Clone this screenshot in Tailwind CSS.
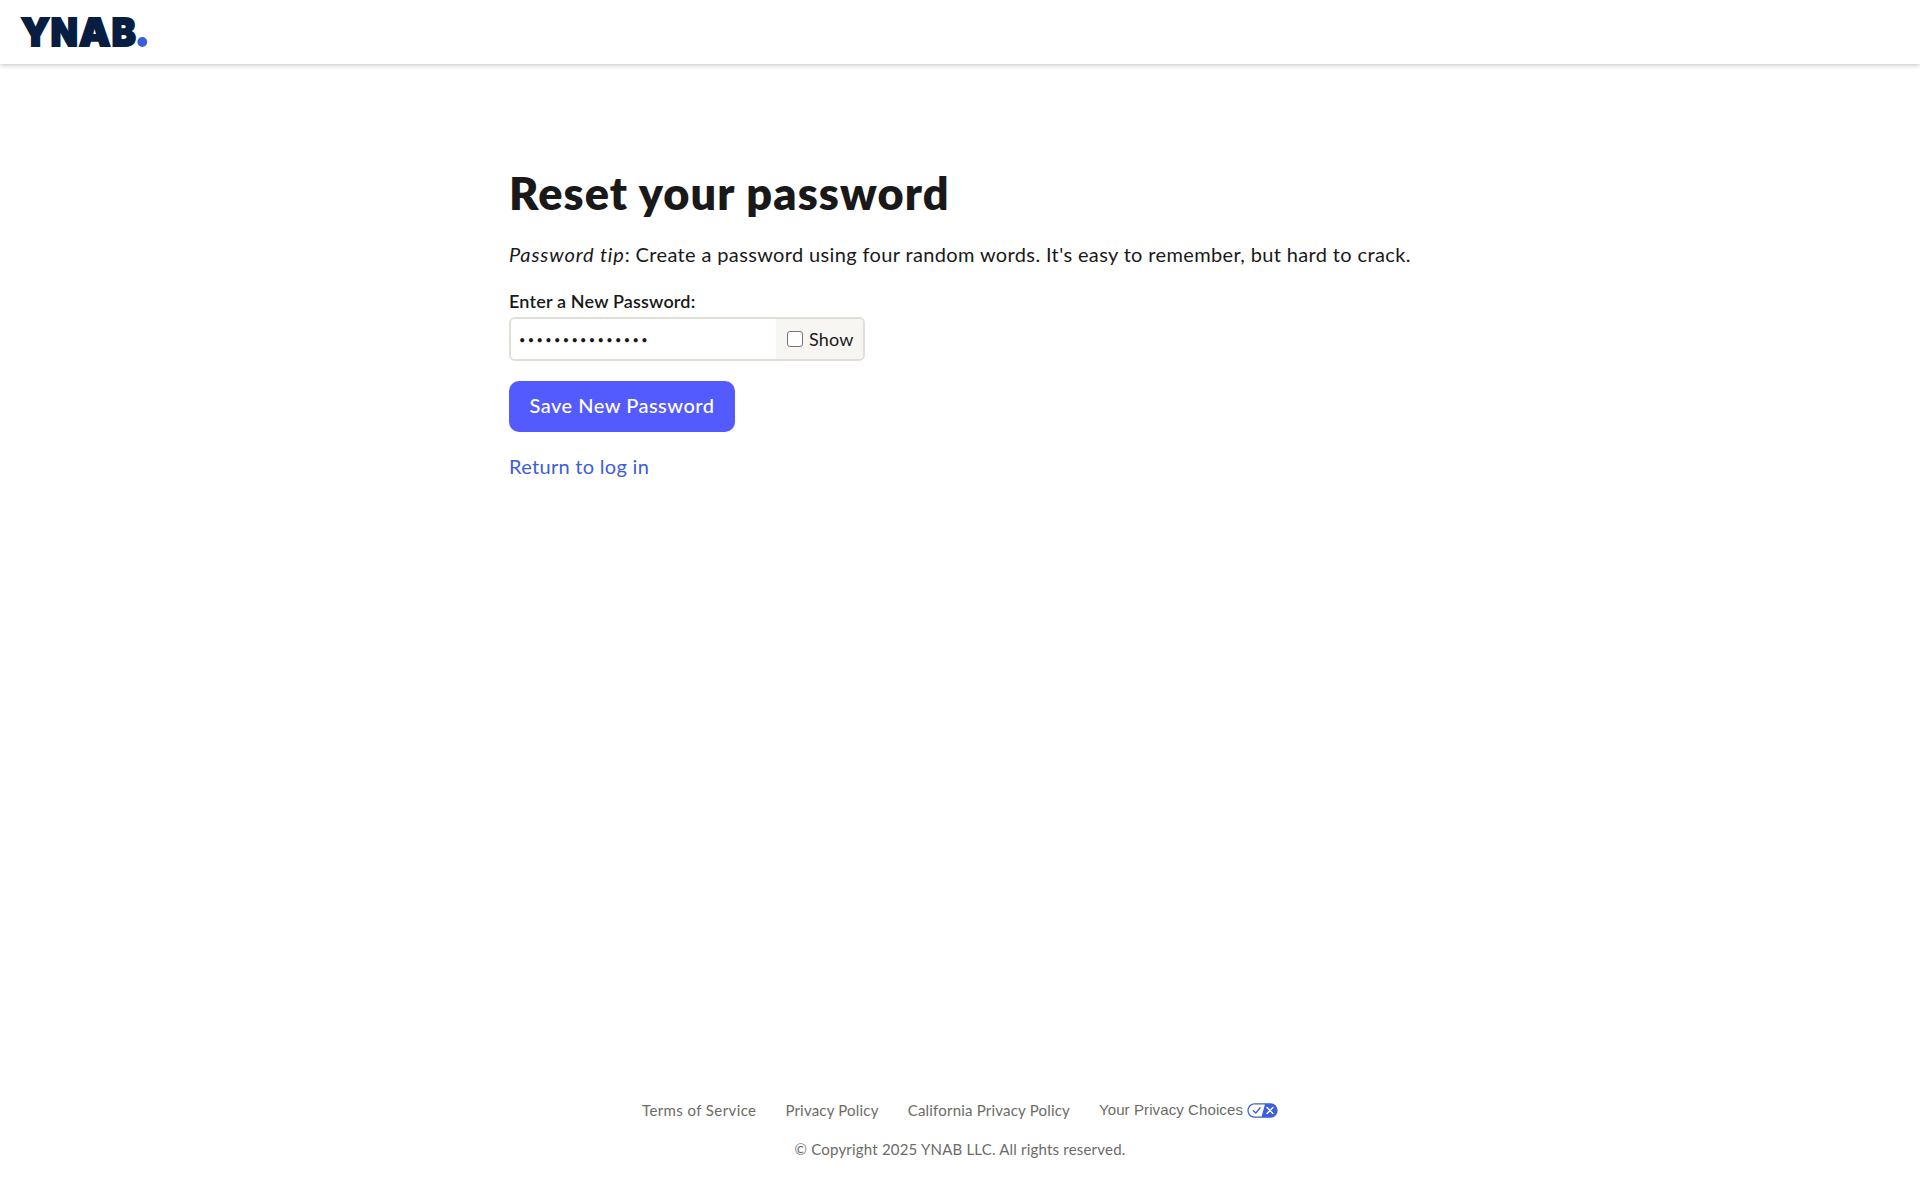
<!DOCTYPE html>
<html lang="en">
<head>
    <meta charset="UTF-8">
    <meta name="viewport" content="width=device-width, initial-scale=1.0">
    <title>Reset your password | YNAB</title>
    <script src="https://cdn.jsdelivr.net/npm/@tailwindcss/browser@4"></script>
</head>
<body class="flex h-screen flex-col overflow-hidden bg-white font-['Lato',sans-serif] text-xl leading-6 text-[#191919]">
    <!-- Header -->
    <header class="flex h-16 shrink-0 items-center bg-white px-5 shadow-[0_1px_5px_rgba(0,0,0,0.25)]">
        <a href="#" aria-label="YNAB">
            <svg class="block h-8 w-[128px] overflow-visible" viewBox="0 0 128 32" fill="#071d42" stroke="#071d42" stroke-width="2" font-family="Inter" font-weight="900" font-size="39">
                <text x="1" y="29.8" textLength="28.8" lengthAdjust="spacingAndGlyphs">Y</text>
                <text x="30.8" y="29.8" textLength="27" lengthAdjust="spacingAndGlyphs">N</text>
                <text x="59" y="29.8" textLength="31.4" lengthAdjust="spacingAndGlyphs">A</text>
                <text x="91.8" y="29.8" textLength="24" lengthAdjust="spacingAndGlyphs">B</text>
                <circle cx="122.3" cy="26" r="4.9" fill="#3b5eda" stroke="none"/>
            </svg>
        </a>
    </header>

    <!-- Reset form -->
    <main class="mx-auto w-[902px] flex-1 pt-[102px]">
        <h1 class="mb-[22px] text-[45px] leading-[54px] font-extrabold tracking-[1.14px] whitespace-nowrap">Reset your password</h1>
        <p class="mb-6 tracking-[0.36px] whitespace-nowrap"><em class="tracking-[0.88px]">Password tip</em>: Create a password using four random words. It's easy to remember, but hard to crack.</p>
        <form>
            <label for="password" class="mb-[5px] block text-lg leading-[22px] font-semibold tracking-[0.17px]">Enter a New Password:</label>
            <div class="mb-5 flex h-11 w-[356px] overflow-hidden rounded-md border-2 border-[#dfded7]">
                <input id="password" type="password" value="correcthorsebat" class="min-w-0 flex-1 bg-white pt-[2px] pl-2 text-[11px] tracking-[2.35px] outline-none">
                <label class="flex w-[87px] items-center gap-[6px] bg-[#f7f6f2] pl-[11px] text-lg tracking-[0.2px]">
                    <input type="checkbox" class="size-4 shrink-0 appearance-none rounded-[3px] border border-[#767676] bg-white">
                    <span>Show</span>
                </label>
            </div>
            <button type="button" class="mb-[22px] block h-[51px] w-[226px] rounded-[10px] bg-[#545bfe] pb-[3px] font-medium tracking-[0.5px] text-white">Save New Password</button>
        </form>
        <a href="#" class="tracking-[0.3px] text-[#3b5eda]">Return to log in</a>
    </main>

    <!-- Footer -->
    <footer class="flex flex-col items-center pb-[41px] text-[15px] leading-5 text-[#6b6b66]">
        <nav class="mb-[19px] flex items-center gap-[29px]">
            <a href="#" class="tracking-[0.4px]">Terms of Service</a>
            <a href="#" class="tracking-[0.2px]">Privacy Policy</a>
            <a href="#" class="tracking-[0.2px]">California Privacy Policy</a>
            <button type="button" class="flex items-center gap-1 font-['Liberation_Sans',sans-serif] tracking-[0.1px]">
                Your Privacy Choices
                <svg class="h-[15px] w-[31px]" viewBox="0 0 30 14">
                    <path fill="#fff" d="M7.4 12.8h6.8l3.1-11.6H7.4C4.2 1.2 1.6 3.8 1.6 7s2.6 5.8 5.8 5.8z"/>
                    <path fill="#3b5eda" d="M22.6 0H7.4C3.5 0 .4 3.1.4 7s3.1 7 7 7h15.2c3.9 0 7-3.1 7-7s-3.1-7-7-7zM1.6 7c0-3.2 2.6-5.8 5.8-5.8h9.9l-3.1 11.6H7.4C4.2 12.8 1.6 10.2 1.6 7z"/>
                    <path fill="none" stroke="#fff" stroke-width="1.4" stroke-linecap="round" d="M19.4 4.2l5.6 5.6M25 4.2l-5.6 5.6"/>
                    <path fill="none" stroke="#3b5eda" stroke-width="1.3" stroke-linecap="round" stroke-linejoin="round" d="M6.1 7.2l2.4 2.3 4.2-5.2"/>
                </svg>
            </button>
        </nav>
        <p class="tracking-[0.2px]">© Copyright 2025 YNAB LLC. All rights reserved.</p>
    </footer>
</body>
</html>
